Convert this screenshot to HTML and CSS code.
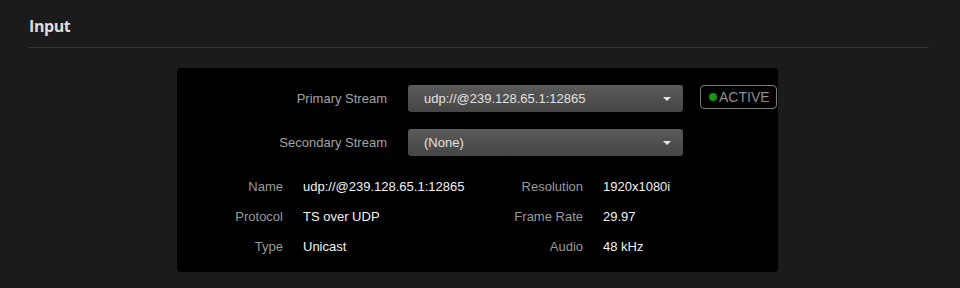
FILE: index.html
```html
<!DOCTYPE html>
<html>
<head>
<meta charset="utf-8">
<link rel="stylesheet" href="styles.css">
</head>
<body>
<section class="section">
  <h2 class="section-title">Input</h2>
  <div class="panel">
    <div class="form">
      <label class="form-label">Primary Stream</label>
      <div class="select"><span class="select-text">udp://@239.128.65.1:12865</span><span class="caret"></span></div>
      <div class="badge"><span class="dot"></span>ACTIVE</div>
      <label class="form-label">Secondary Stream</label>
      <div class="select"><span class="select-text">(None)</span><span class="caret"></span></div>
      <div></div>
    </div>
    <div class="info">
      <span class="info-label">Name</span><span class="info-value">udp://@239.128.65.1:12865</span>
      <span class="info-label">Resolution</span><span class="info-value">1920x1080i</span>
      <span class="info-label">Protocol</span><span class="info-value">TS over UDP</span>
      <span class="info-label">Frame Rate</span><span class="info-value">29.97</span>
      <span class="info-label">Type</span><span class="info-value">Unicast</span>
      <span class="info-label">Audio</span><span class="info-value">48 kHz</span>
    </div>
  </div>
</section>
</body>
</html>
```
FILE: styles.css
```css
html, body {
  margin: 0;
  padding: 0;
  background: #1b1b1b;
  height: 100%;
  font-family: "Liberation Sans", Arial, sans-serif;
}
.section {
  padding: 15px 31px 0 29px;
}
.section-title {
  margin: 0;
  font-family: "Open Sans", "Liberation Sans", sans-serif;
  font-weight: 700;
  font-size: 16px;
  letter-spacing: -0.4px;
  line-height: 22px;
  color: #dcdcdc;
  padding-bottom: 10px;
  border-bottom: 1px solid #343434;
}
.panel {
  margin: 20px 0 0 148px;
  width: 601px;
  background: #000;
  border-radius: 4px;
  padding: 17px 0 11px;
  box-sizing: border-box;
}
.form {
  display: grid;
  grid-template-columns: 210px 275px 77px;
  column-gap: 21px;
  row-gap: 17px;
  align-items: start;
  justify-items: start;
}
.form-label {
  justify-self: stretch;
  text-align: right;
  font-size: 13px;
  line-height: 27px;
  color: #a3a3a3;
}
.select {
  justify-self: stretch;
  height: 27px;
  border-radius: 3px;
  background: linear-gradient(#5a5a5a, #454545);
  display: flex;
  align-items: center;
  justify-content: space-between;
  padding: 0 12px 0 16px;
  box-sizing: border-box;
}
.select-text {
  font-size: 13px;
  color: #e2e2e2;
}
.caret {
  width: 0;
  height: 0;
  border-left: 4px solid transparent;
  border-right: 4px solid transparent;
  border-top: 4px solid #e6e6e6;
}
.badge {
  margin-left: -4px;
  width: 77px;
  height: 24px;
  box-sizing: border-box;
  border: 1px solid #7a7a7a;
  border-radius: 4px;
  display: flex;
  align-items: center;
  padding-left: 8px;
  gap: 2px;
  font-size: 14px;
  color: #8e8e8e;
}
.dot {
  width: 8px;
  height: 8px;
  border-radius: 50%;
  background: #119a11;
}
.info {
  margin-top: 15px;
  display: grid;
  grid-template-columns: 106px 180px 80px auto;
  column-gap: 20px;
  grid-auto-rows: 30px;
  align-items: center;
}
.info-label {
  text-align: right;
  font-size: 13px;
  color: #9a9a9a;
}
.info-value {
  font-size: 13px;
  color: #f2f2f2;
}
```
